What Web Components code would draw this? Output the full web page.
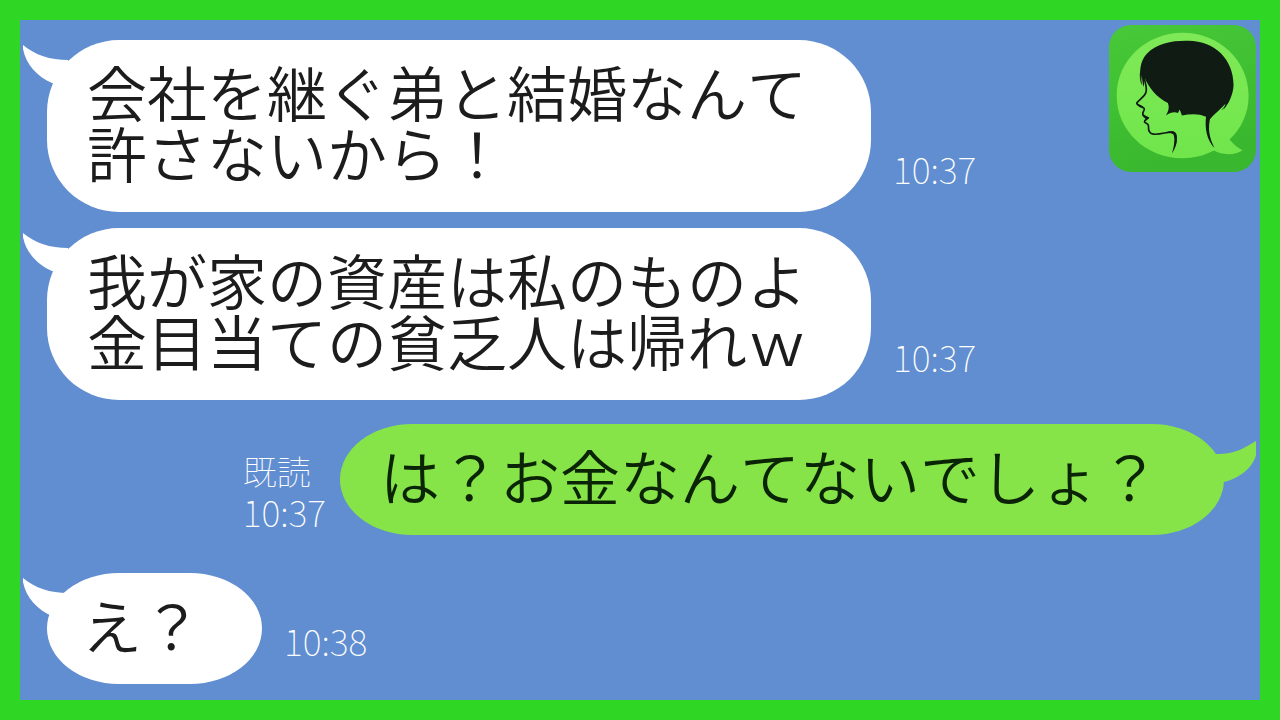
<!DOCTYPE html>
<html lang="ja">
<head>
<meta charset="utf-8">
<meta name="viewport" content="width=device-width, initial-scale=1">
<title>トーク</title>
<style>
  body { margin: 0; font-family: "Noto Sans CJK JP", "Noto Sans", sans-serif; }
</style>
</head>
<body>
<chat-frame>
  <app-badge slot="badge"></app-badge>
  <chat-group>
    <chat-message time="10:37">会社を継ぐ弟と結婚なんて<br>許さないから！</chat-message>
    <chat-message time="10:37">我が家の資産は私のものよ<br>金目当ての貧乏人は帰れｗ</chat-message>
  </chat-group>
  <chat-group>
    <chat-message own time="10:37" status="既読">は？お金なんてないでしょ？</chat-message>
  </chat-group>
  <chat-group class="reply">
    <chat-message short time="10:38">え？</chat-message>
  </chat-group>
</chat-frame>

<template id="frame-template">
  <style>
    :host { display: block; box-sizing: border-box; min-height: 100vh; border: 20px solid #30d624; background: #618ed0; position: relative; }
    main { display: flex; flex-direction: column; gap: 24px; padding: 20px 36px 15px 27px; }
    ::slotted(.reply) { margin-top: 14px; }
    ::slotted([slot="badge"]) { position: absolute; top: 5px; right: 4px; }
  </style>
  <slot name="badge"></slot>
  <main><slot></slot></main>
</template>

<template id="group-template">
  <style>
    :host { display: flex; flex-direction: column; gap: 16px; }
  </style>
  <slot></slot>
</template>

<template id="message-template">
  <style>
    :host { display: flex; align-items: flex-end; gap: 22px; }
    :host([own]) { flex-direction: row-reverse; gap: 14px; }
    .bubble { position: relative; box-sizing: border-box; padding: 20px 64px 30px 40px; border-radius: 72px / min(72px, 50%); background: #fff; color: #1c1c1c; }
    :host([short]) .bubble { padding-left: 35px; padding-right: 60px; }
    :host([own]) .bubble { background: #86e449; color: #0a2405; }
    p { margin: 0; font-size: 60px; line-height: 61px; font-weight: 350; font-kerning: none; white-space: nowrap; }
    .tail { position: absolute; top: 5px; left: -24px; width: 48px; height: 42px; fill: #fff; overflow: visible; }
    :host([own]) .tail { top: 17px; left: auto; right: -32px; fill: #86e449; transform: scaleX(-1); }
    .theirs, :host([own]) .mine { display: inline; }
    .mine, :host([own]) .theirs { display: none; }
    .meta { display: flex; flex-direction: column; padding-bottom: 24px; color: #fff; font-size: 36px; line-height: 40px; font-weight: 100; }
    :host([own]) .meta { padding-bottom: 4px; }
    .status { font-size: 34px; }
    .status:empty { display: none; }
  </style>
  <div class="bubble">
    <svg class="tail" viewBox="0 0 48 42" aria-hidden="true">
      <path class="theirs" d="M0 0C12 10 27 15 45 15L50 42L29 38C15 32 3 20 0 4Z"/>
      <path class="mine" d="M0 0C12 7 20 13 40 13L52 42L32 41C18 38 3 27 0 14Z"/>
    </svg>
    <p><slot></slot></p>
  </div>
  <div class="meta"><span class="status"></span><time></time></div>
</template>

<template id="badge-template">
  <style>
    :host { display: block; width: 147px; height: 147px; }
    svg { display: block; width: 100%; height: 100%; }
  </style>
  <svg viewBox="28 28 439 439" role="img" aria-label="横顔のアイコン">
    <defs>
      <linearGradient id="tile" x1="0" y1="0" x2="0.3" y2="1"><stop offset="0" stop-color="#47c938"/><stop offset="1" stop-color="#39b72e"/></linearGradient>
      <linearGradient id="balloon" x1="0" y1="0" x2="0" y2="1"><stop offset="0" stop-color="#7fe957"/><stop offset="1" stop-color="#70e64b"/></linearGradient>
    </defs>
    <rect x="28" y="28" width="439" height="439" rx="66" fill="url(#tile)"/>
    <path fill="url(#balloon)" d="M248 51C357 51 445 134 445 239C445 291 423 337 388 370C399 384 412 396 427 402C402 419 365 416 341 403C313 418 281 426 248 426C139 426 51 343 51 239C51 134 139 51 248 51Z"/>
    <path fill="#101b14" d="M124 204C118 172 119 137 141 114C171 82 219 74 264 75C347 76 399 132 400 207C399 235 386 263 370 280L376 263L358 281C349 290 337 298 331 308L318 302C297 292 272 293 246 298L239 280L234 291C222 286 211 290 198 298C206 286 209 274 204 261C170 244 147 216 134 184L132 214C128 204 127 190 126 178Z"/>
    <path fill="none" stroke="#101b14" stroke-width="5" stroke-linejoin="round" stroke-linecap="round" d="M133 184C136 203 143 216 138 230C134 242 118 251 111 261C111 271 128 270 133 277C136 284 127 287 129 294C130 300 138 301 145 306C141 311 134 310 134 317C137 323 146 320 146 330C145 343 148 353 161 354C184 356 202 346 219 348C229 353 229 373 225 387"/>
    <path fill="#101b14" d="M202 347C216 343 228 345 230 356C233 373 229 393 216 412C222 390 227 367 220 354ZM318 300L331 303C323 335 326 362 343 395C321 374 313 337 318 300ZM109 262L124 268L133 275L120 274ZM127 291L136 299L149 305L139 310L128 300Z"/>
    <path fill="none" stroke="#101b14" stroke-width="2" d="M121 172Q120 190 126 206M391 239Q384 265 366 281"/>
  </svg>
</template>

<script>
  class TemplateElement extends HTMLElement {
    constructor() {
      super();
      const template = document.getElementById(this.constructor.templateId);
      this.attachShadow({ mode: "open" }).append(template.content.cloneNode(true));
    }
  }

  class ChatFrame extends TemplateElement { static templateId = "frame-template"; }
  class ChatGroup extends TemplateElement { static templateId = "group-template"; }
  class AppBadge extends TemplateElement { static templateId = "badge-template"; }

  class ChatMessage extends TemplateElement {
    static templateId = "message-template";
    connectedCallback() {
      this.shadowRoot.querySelector("time").textContent = this.getAttribute("time");
      this.shadowRoot.querySelector(".status").textContent = this.getAttribute("status") || "";
    }
  }

  customElements.define("chat-frame", ChatFrame);
  customElements.define("chat-group", ChatGroup);
  customElements.define("app-badge", AppBadge);
  customElements.define("chat-message", ChatMessage);
</script>
</body>
</html>
